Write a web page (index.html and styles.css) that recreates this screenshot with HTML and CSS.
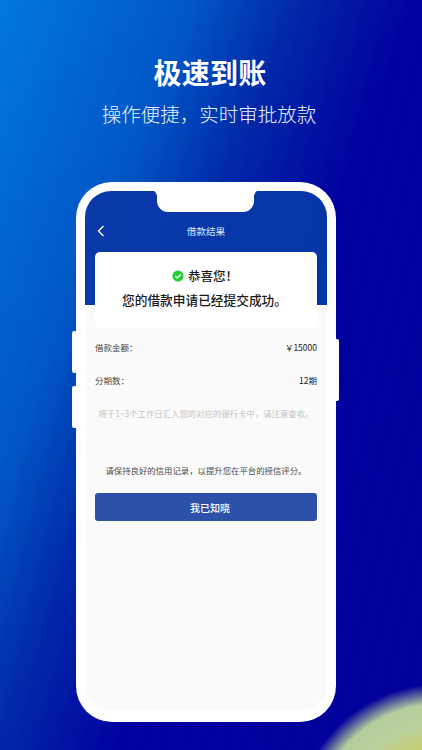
FILE: index.html
```html
<!DOCTYPE html>
<html lang="zh-CN">
<head>
<meta charset="utf-8">
<title>极速到账</title>
<link rel="stylesheet" href="styles.css">
</head>
<body>
<main class="poster">
  <h1 class="headline">极速到账</h1>
  <p class="subline">操作便捷，实时审批放款</p>
  <div class="phone">
    <span class="side side-l1"></span>
    <span class="side side-l2"></span>
    <span class="side side-r"></span>
    <div class="screen">
      <header class="topbar">
        <svg class="back" viewBox="0 0 8 12" width="8" height="12" aria-hidden="true"><path d="M6.5 1 1.5 6l5 5" fill="none" stroke="#fff" stroke-width="1.3"/></svg>
        <span class="topbar-title">借款结果</span>
      </header>
      <span class="notch"></span>
      <section class="card">
        <div class="card-title">
          <svg class="check" viewBox="0 0 12 12" width="12" height="12" aria-hidden="true"><circle cx="6" cy="6" r="5.6" fill="#1fd030"/><path d="M3.2 6.1 5.2 8 8.9 4.4" fill="none" stroke="#fff" stroke-width="1.5"/></svg>
          <span>恭喜您！</span>
        </div>
        <div class="card-text">您的借款申请已经提交成功。</div>
      </section>
      <div class="details">
        <div class="row"><span>借款金额：</span><span class="value">￥15000</span></div>
        <div class="row"><span>分期数：</span><span class="value">12期</span></div>
        <p class="note">将于1~3个工作日汇入您的对应的银行卡中，请注意查收。</p>
        <p class="tip">请保持良好的信用记录，以提升您在平台的授信评分。</p>
        <button class="confirm" type="button">我已知晓</button>
      </div>
    </div>
  </div>
</main>
</body>
</html>
```
FILE: styles.css
```css
* { box-sizing: border-box; }
html, body { margin: 0; padding: 0; }
body {
  width: 422px;
  height: 750px;
  overflow: hidden;
  font-family: "Noto Sans CJK SC", "Noto Sans", sans-serif;
}
.poster {
  width: 422px;
  height: 750px;
  padding-top: 52px;
  display: flex;
  flex-direction: column;
  align-items: center;
  color: #fff;
  background:
    radial-gradient(circle at 440px 830px, #cdcb58 0, #c9cc60 75px, #bbd19c 104px, #b5cc9c 126px, rgba(0, 0, 154, 0) 146px),
    repeating-linear-gradient(104deg, rgba(255,255,255,0) 0, rgba(255,255,255,0.007) 9px, rgba(255,255,255,0) 20px),
    linear-gradient(112deg, #0078dc 0%, #0055c5 27%, #0028a8 41%, #00009e 58%, #00009a 100%);
}
.headline {
  margin: 0 2px 0 0;
  font-size: 28px;
  line-height: 40px;
  font-weight: 700;
  letter-spacing: 0.2px;
}
.subline {
  margin: 2px 4px 0 0;
  font-size: 19.5px;
  line-height: 40px;
  font-weight: 300;
  color: #eaf0fc;
}
.phone {
  position: relative;
  align-self: flex-start;
  margin: 48px 0 0 76px;
  width: 259.5px;
  height: 540px;
  padding: 9px 8.5px 12px 9px;
  background: #fff;
  border-radius: 36px;
}
.side {
  position: absolute;
  width: 5px;
  background: #fff;
  border-radius: 2px;
}
.side-l1 { left: -4px; top: 149px; height: 42px; }
.side-l2 { left: -4px; top: 204px; height: 42px; }
.side-r { right: -3px; top: 157px; height: 62px; }
.screen {
  position: relative;
  height: 100%;
  background: #fafafa;
  border-radius: 26px;
  overflow: hidden;
}
.notch {
  position: absolute;
  left: 72px;
  top: -1px;
  width: 97px;
  height: 22px;
  background: #fff;
  border-radius: 0 0 11px 11px;
}
.notch::before,
.notch::after {
  content: "";
  position: absolute;
  top: 0;
  width: 6px;
  height: 6px;
}
.notch::before {
  left: -6px;
  background: radial-gradient(circle at 0 100%, transparent 5.5px, #fff 6px);
}
.notch::after {
  right: -6px;
  background: radial-gradient(circle at 100% 100%, transparent 5.5px, #fff 6px);
}
.topbar {
  height: 114px;
  padding: 28px 14px 0;
  display: flex;
  justify-content: center;
  background: linear-gradient(100deg, #0a3aa8, #0536a8);
  position: relative;
}
.back { position: absolute; left: 12px; top: 34px; }
.topbar-title { font-size: 9.6px; line-height: 24px; color: #dbe4f6; }
.card {
  position: relative;
  margin: -53px 10px 0;
  height: 76px;
  padding-top: 14px;
  background: #fff;
  border-radius: 5px;
  text-align: center;
  color: #1a1a1a;
}
.card-title {
  display: flex;
  justify-content: center;
  align-items: center;
  gap: 4px;
  font-size: 12.5px;
  line-height: 20px;
  font-weight: 500;
  padding-right: 2px;
}
.card-text { font-size: 12.7px; line-height: 20px; font-weight: 500; margin: 4px 3px 0 0; }
.details { padding: 3px 10px 0; }
.row {
  height: 33px;
  display: flex;
  justify-content: space-between;
  align-items: center;
  border-bottom: 1px solid #f5f5f5;
  font-size: 8.5px;
  color: #444;
}
.value { color: #222; }
.note {
  margin: 8px 0 0;
  text-align: center;
  font-size: 8.4px;
  line-height: 16px;
  color: #c4c4c4;
}
.tip {
  margin: 41px 0 0;
  text-align: center;
  font-size: 8.4px;
  line-height: 16px;
  color: #4a4a4a;
}
.confirm {
  display: block;
  width: 100%;
  height: 28px;
  margin-top: 15px;
  padding: 1px 0 0 8px;
  border: 0;
  border-radius: 3px;
  background: #2d50a8;
  color: #fff;
  font: 500 10px/27px "Noto Sans CJK SC", "Noto Sans", sans-serif;
}
```
